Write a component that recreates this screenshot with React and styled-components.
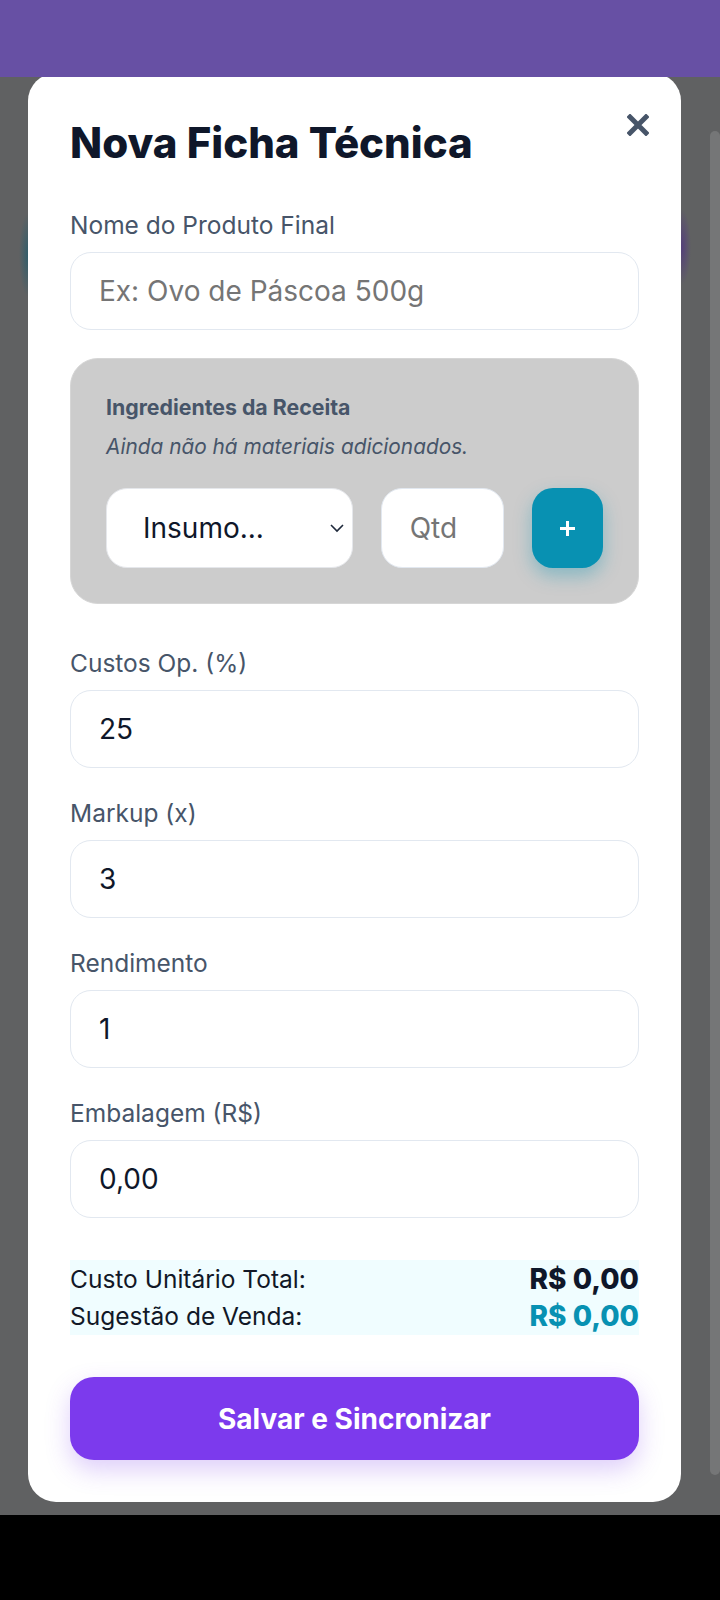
import React from 'react';
import styled, { createGlobalStyle } from 'styled-components';

const GlobalStyle = createGlobalStyle`
  html, body {
    margin: 0;
    padding: 0;
    background: #000;
    font-family: Inter, "Noto Sans", sans-serif;
  }
  * {
    box-sizing: border-box;
  }
`;

const TopBar = styled.header`
  background: #6750a4;
  height: 77px;
  position: relative;
  z-index: 2;
`;

// page dimmed behind the dialog; the two gradients are the glow of a card peeking out under it
const Backdrop = styled.div`
  background:
    radial-gradient(9px 42px at 28px 178px, rgba(38, 92, 108, 0.8), rgba(38, 92, 108, 0) 100%),
    radial-gradient(9px 38px at 682px 170px, rgba(82, 56, 128, 0.8), rgba(82, 56, 128, 0) 100%),
    #606162;
  display: flex;
  align-items: flex-start;
  height: 1438px;
  padding-left: 28px;
`;

const ScrollThumb = styled.div`
  background: #757677;
  border-radius: 5px;
  height: 1344px;
  margin-left: auto;
  margin-top: 54px;
  width: 10px;
`;

const Modal = styled.div`
  background: #fff;
  border-radius: 28px;
  margin-top: -4px;
  padding: 42px;
  position: relative;
  width: 653px;
`;

const Title = styled.h2`
  color: #0f172a;
  font-size: 42px;
  font-weight: 800;
  line-height: 56px;
  margin: 0 0 37px;
`;

const CloseButton = styled.button`
  background: none;
  border: 0;
  cursor: pointer;
  padding: 0;
  position: absolute;
  right: 32px;
  top: 41px;
  width: 22px;
  height: 22px;
  svg {
    display: block;
  }
`;

const Field = styled.div`
  margin-bottom: ${props => props.$gap || 28}px;
`;

const Label = styled.label`
  color: #475569;
  display: block;
  font-size: 24.5px;
  line-height: 34px;
  margin-bottom: 10px;
`;

const TextInput = styled.input`
  background: #fff;
  border: 1px solid #e2e8f0;
  border-radius: 21px;
  color: #0f172a;
  display: block;
  font-family: inherit;
  font-size: 28px;
  height: 78px;
  outline: none;
  padding: 0 28px;
  width: 100%;
  &::placeholder {
    color: #757575;
  }
`;

const IngredientsBox = styled.section`
  background: #cccccc;
  border: 1px solid #d6d6d6;
  border-radius: 28px;
  margin-bottom: 42px;
  padding: 34px 35px 35px;
`;

const BoxTitle = styled.h3`
  color: #475569;
  font-size: 21.3px;
  font-weight: 700;
  line-height: 28px;
  margin: 0 0 12px;
`;

const EmptyNote = styled.p`
  color: #475569;
  font-size: 20.8px;
  font-style: italic;
  line-height: 28px;
  margin: 0 0 27px;
`;

const AddRow = styled.div`
  display: grid;
  grid-template-columns: minmax(0, 2fr) minmax(0, 1fr) 71px;
  gap: 28px;
`;

const SelectWrap = styled.div`
  position: relative;
  svg {
    pointer-events: none;
    position: absolute;
    right: 9px;
    top: 36px;
  }
`;

const Select = styled.select`
  appearance: none;
  background: #fff;
  border: 1px solid #e5e7eb;
  border-radius: 21px;
  color: #0f172a;
  font-family: inherit;
  font-size: 28px;
  height: 80px;
  outline: none;
  padding: 0 30px 0 36px;
  width: 100%;
`;

const QtyInput = styled(TextInput)`
  height: 80px;
`;

const AddButton = styled.button`
  background: #0891b2;
  border: 0;
  border-radius: 21px;
  box-shadow: 0 8px 18px rgba(8, 145, 178, 0.35);
  cursor: pointer;
  display: flex;
  align-items: center;
  justify-content: center;
  height: 80px;
  padding: 0;
`;

const Summary = styled.div`
  background: #f0fdff;
  margin-top: 42px;
`;

const SummaryRow = styled.div`
  align-items: center;
  display: flex;
  height: 37.5px;
  justify-content: space-between;
  span {
    color: #111827;
    font-size: 24.5px;
  }
  strong {
    color: ${props => props.$accent ? '#0891b2' : '#0f172a'};
    font-size: 28px;
    font-weight: 800;
  }
`;

const SaveButton = styled.button`
  background: #7c3aed;
  border: 0;
  border-radius: 24px;
  box-shadow: 0 10px 24px rgba(124, 58, 237, 0.25);
  color: #fff;
  cursor: pointer;
  display: block;
  font-family: inherit;
  font-size: 28px;
  font-weight: 700;
  height: 83px;
  margin-top: 42px;
  width: 100%;
`;

const fields = [
  { label: 'Custos Op. (%)', value: '25' },
  { label: 'Markup (x)', value: '3' },
  { label: 'Rendimento', value: '1' },
  { label: 'Embalagem (R$)', value: '0,00' },
];

export default function App() {
  return (
    <>
      <GlobalStyle />
      <TopBar />
      <Backdrop>
        <Modal>
          <CloseButton aria-label="Fechar">
            <svg width="22" height="22" viewBox="0 0 22 22">
              <path d="M3 3 L19 19 M19 3 L3 19" stroke="#475569" strokeWidth="5" strokeLinecap="square" />
            </svg>
          </CloseButton>
          <Title>Nova Ficha Técnica</Title>

          <Field>
            <Label>Nome do Produto Final</Label>
            <TextInput placeholder="Ex: Ovo de Páscoa 500g" />
          </Field>

          <IngredientsBox>
            <BoxTitle>Ingredientes da Receita</BoxTitle>
            <EmptyNote>Ainda não há materiais adicionados.</EmptyNote>
            <AddRow>
              <SelectWrap>
                <Select defaultValue="">
                  <option value="">Insumo...</option>
                </Select>
                <svg width="14" height="9" viewBox="0 0 14 9">
                  <path d="M1 1 L7 7 L13 1" fill="none" stroke="#1e293b" strokeWidth="1.6" />
                </svg>
              </SelectWrap>
              <QtyInput placeholder="Qtd" />
              <AddButton aria-label="Adicionar">
                <svg width="15" height="15" viewBox="0 0 15 15">
                  <path d="M7.5 0 V15 M0 7.5 H15" stroke="#fff" strokeWidth="3" />
                </svg>
              </AddButton>
            </AddRow>
          </IngredientsBox>

          {fields.map((f, i) => (
            <Field key={f.label} $gap={i === fields.length - 1 ? 0 : 28}>
              <Label>{f.label}</Label>
              <TextInput defaultValue={f.value} />
            </Field>
          ))}

          <Summary>
            <SummaryRow>
              <span>Custo Unitário Total:</span>
              <strong>R$ 0,00</strong>
            </SummaryRow>
            <SummaryRow $accent>
              <span>Sugestão de Venda:</span>
              <strong>R$ 0,00</strong>
            </SummaryRow>
          </Summary>

          <SaveButton>Salvar e Sincronizar</SaveButton>
        </Modal>
        <ScrollThumb />
      </Backdrop>
    </>
  );
}
